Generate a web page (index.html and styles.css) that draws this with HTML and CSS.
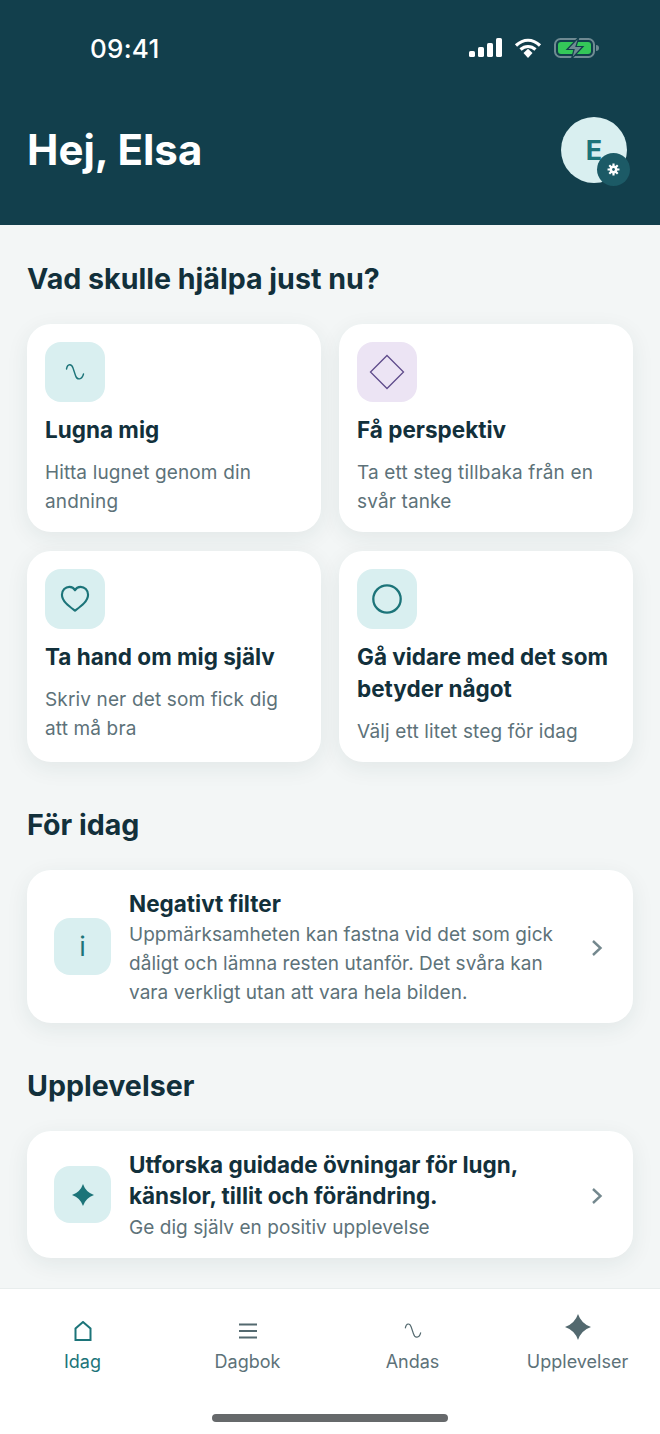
FILE: index.html
```html
<!DOCTYPE html>
<html lang="sv">
<head>
<meta charset="utf-8">
<title>Hej, Elsa</title>
<link rel="stylesheet" href="styles.css">
</head>
<body>
<div class="app">
  <header class="header">
    <div class="status">
      <span class="time">09:41</span>
      <div class="status-icons">
        <svg width="34" height="20" viewBox="0 0 34 20"><rect x="1" y="13" width="6" height="6" rx="1.6" fill="#fff"/><rect x="10" y="9" width="6" height="10" rx="1.6" fill="#fff"/><rect x="19" y="5" width="6" height="14" rx="1.6" fill="#fff"/><rect x="28" y="0" width="6" height="19" rx="1.6" fill="#fff"/></svg>
        <svg width="28" height="20" viewBox="0 0 28 20"><path d="M2 7.500C9.500 .5 18.500 .5 26 7.500" fill="none" stroke="#fff" stroke-width="3.200"/><path d="M6.500 11.500C11 7.500 17 7.500 21.500 11.500" fill="none" stroke="#fff" stroke-width="3.200"/><path d="M9.500 15L14 10.800 18.500 15 14 20Z" fill="#fff"/></svg>
        <svg width="46" height="22" viewBox="0 0 46 22"><rect x="1" y="2" width="39" height="18" rx="5.500" fill="none" stroke="#6f8a92" stroke-width="2"/><rect x="4" y="5" width="33" height="12" rx="3" fill="#34c759"/><path d="M42 8c2 0 3 1 3 3s-1 3-3 3z" fill="#6f8a92"/><path d="M25 0L13 12.500h7L17.500 22 29 9.500h-7z" fill="#6f8a92" stroke="#123f4c" stroke-width="1.200"/></svg>
      </div>
    </div>
    <div class="greeting">
      <h1>Hej, Elsa</h1>
      <div class="avatar">E
        <span class="gear">
          <svg width="13" height="13" viewBox="0 0 12 12"><g stroke="#fff" stroke-width="2"><path d="M6 .5v11M.5 6h11M2.100 2.100l7.800 7.800M9.900 2.100l-7.800 7.800"/></g><circle cx="6" cy="6" r="3.600" fill="#fff"/><circle cx="6" cy="6" r="1.300" fill="#1c5a66"/></svg>
        </span>
      </div>
    </div>
  </header>

  <main class="content">
    <h2 class="section-title first">Vad skulle hjälpa just nu?</h2>
    <div class="grid">
      <article class="card">
        <div class="tile teal"><svg width="20" height="20" viewBox="0 0 20 20"><path d="M1.500 7C2.500 1.500 6.500 1.500 8 6L10.500 13.500C12 18.500 17 18 18.500 12" fill="none" stroke="#1c7479" stroke-width="1.400" stroke-linecap="round"/></svg></div>
        <h3>Lugna mig</h3>
        <p>Hitta lugnet genom din andning</p>
      </article>
      <article class="card">
        <div class="tile purple"><svg width="36" height="36" viewBox="0 0 36 36"><path d="M18 1.500L34.500 18 18 34.500 1.500 18Z" fill="none" stroke="#5f4b8b" stroke-width="1.300"/></svg></div>
        <h3>Få perspektiv</h3>
        <p>Ta ett steg tillbaka från en svår tanke</p>
      </article>
      <article class="card">
        <div class="tile teal"><svg width="30" height="28" viewBox="0 0 32 30"><path d="M16 27.500C10 23 2 17.500 2 10.500 2 5.500 5.800 2 10 2c2.600 0 4.800 1.200 6 3.600C17.200 3.200 19.400 2 22 2c4.200 0 8 3.500 8 8.500 0 7-8 12.500-14 17Z" fill="none" stroke="#1c7479" stroke-width="2.300" stroke-linejoin="round"/></svg></div>
        <h3>Ta hand om mig själv</h3>
        <p>Skriv ner det som fick dig att må bra</p>
      </article>
      <article class="card">
        <div class="tile teal"><svg width="32" height="32" viewBox="0 0 32 32"><circle cx="16" cy="16" r="13.700" fill="none" stroke="#1c7479" stroke-width="2.300"/></svg></div>
        <h3>Gå vidare med det som betyder något</h3>
        <p>Välj ett litet steg för idag</p>
      </article>
    </div>

    <h2 class="section-title today">För idag</h2>
    <a class="row row-filter">
      <div class="tile-small"><span class="info">i</span></div>
      <div class="row-text">
        <h3>Negativt filter</h3>
        <p>Uppmärksamheten kan fastna vid det som gick dåligt och lämna resten utanför. Det svåra kan vara verkligt utan att vara hela bilden.</p>
      </div>
      <svg class="chevron" width="12" height="18" viewBox="0 0 12 18"><path d="M2 2l7.500 7L2 16" fill="none" stroke="#74888e" stroke-width="2.400"/></svg>
    </a>

    <h2 class="section-title exp">Upplevelser</h2>
    <a class="row row-exp">
      <div class="tile-small"><svg width="22" height="22" viewBox="0 0 24 24"><path d="M12 0Q15 9 24 12Q15 15 12 24Q9 15 0 12Q9 9 12 0Z" fill="#1c7479"/></svg></div>
      <div class="row-text">
        <h3>Utforska guidade övningar för lugn, känslor, tillit och förändring.</h3>
        <p>Ge dig själv en positiv upplevelse</p>
      </div>
      <svg class="chevron" width="12" height="18" viewBox="0 0 12 18"><path d="M2 2l7.500 7L2 16" fill="none" stroke="#74888e" stroke-width="2.400"/></svg>
    </a>
  </main>

  <nav class="tabs">
    <div class="tab active">
      <span class="tab-icon"><svg width="18" height="20" viewBox="0 0 18 20"><path d="M1.500 19V7.500L9 1l7.500 6.500V19Z" fill="none" stroke="#1c7479" stroke-width="2"/></svg></span>
      <span>Idag</span>
    </div>
    <div class="tab">
      <span class="tab-icon"><svg width="18" height="16" viewBox="0 0 18 16"><path d="M0 1.500h18M0 8h18M0 14.500h18" stroke="#53696f" stroke-width="2.200"/></svg></span>
      <span>Dagbok</span>
    </div>
    <div class="tab">
      <span class="tab-icon"><svg width="18" height="18" viewBox="0 0 20 20"><path d="M1.500 6.500C2.500 1 6.500 1 8 5.500L10.500 13C12 18.500 17 18 18.500 12" fill="none" stroke="#53696f" stroke-width="1.300" stroke-linecap="round"/></svg></span>
      <span>Andas</span>
    </div>
    <div class="tab">
      <span class="tab-icon tab-star"><svg width="26" height="26" viewBox="0 0 24 24"><path d="M12 0Q15 9 24 12Q15 15 12 24Q9 15 0 12Q9 9 12 0Z" fill="#53696f"/></svg></span>
      <span>Upplevelser</span>
    </div>
    <div class="home-bar"></div>
  </nav>
</div>
</body>
</html>
```

FILE: styles.css
```css
* { box-sizing: border-box; margin: 0; padding: 0; }
html, body { width: 660px; height: 1434px; overflow: hidden; }
body { font-family: Inter, "Liberation Sans", sans-serif; background: #f3f6f6; color: #12303b; }
.app { width: 660px; height: 1434px; display: flex; flex-direction: column; }

.header { height: 225px; background: #123f4c; color: #fff; padding: 34px 33px 0 28px; flex: none; }
.status { display: flex; justify-content: space-between; align-items: center; height: 30px; padding: 0 27px 0 62px; }
.time { font-size: 26px; font-weight: 500; line-height: 30px; letter-spacing: .25px; }
.status-icons { display: flex; align-items: center; gap: 12px; margin-top: -2px; }
.greeting { display: flex; justify-content: space-between; align-items: center; margin-top: 53px; height: 66px; }
h1 { font-size: 42px; font-weight: 700; line-height: 56px; margin-left: -1px; }
.avatar { position: relative; width: 66px; height: 66px; border-radius: 50%; background: #d9eff0; color: #1c7479; font-size: 27px; font-weight: 700; display: flex; align-items: center; justify-content: center; }
.gear { position: absolute; right: -3px; bottom: -3px; width: 33px; height: 33px; border-radius: 50%; background: #1c5a66; display: flex; align-items: center; justify-content: center; }

.content { flex: 1; padding: 0 27px; }
.section-title { font-size: 28.6px; font-weight: 700; line-height: 36px; color: #12303b; }
.first { margin-top: 36px; }
.today { margin-top: 45px; }
.exp { margin-top: 45px; }

.grid { display: grid; grid-template-columns: 294px 294px; column-gap: 18px; row-gap: 19px; margin-top: 27px; }
.card { background: #fff; border-radius: 24px; padding: 18px 18px 16.5px; box-shadow: 0 6px 22px rgba(20, 60, 70, .08); }
.tile { width: 60px; height: 60px; border-radius: 16px; display: flex; align-items: center; justify-content: center; }
.teal { background: #d9eff0; }
.purple { background: #ece4f4; }
.card h3 { font-size: 22.5px; font-weight: 700; line-height: 32px; color: #12303b; margin-top: 11.5px; }
.card p { font-size: 19px; line-height: 29px; color: #5d7279; margin-top: 12px; letter-spacing: .14px; }

.row { display: flex; align-items: center; background: #fff; border-radius: 24px; box-shadow: 0 6px 22px rgba(20, 60, 70, .08); padding: 0 30px 0 27px; margin-top: 27px; }
.row-filter { height: 153px; }
.row-exp { height: 127px; }
.tile-small { width: 57px; height: 57px; border-radius: 16px; background: #d9eff0; display: flex; align-items: center; justify-content: center; flex: none; margin-right: 18px; }
.info { font-size: 27px; color: #1c7479; font-weight: 400; }
.row-text { flex: 1; padding-top: 2px; }
.row-text h3 { font-size: 22.5px; font-weight: 700; line-height: 31px; color: #12303b; }
.row-text p { font-size: 19px; line-height: 29px; color: #5d7279; letter-spacing: .05px; margin-top: 2px; }
.row-filter h3 { line-height: 32px; }
.row-filter p { margin-top: 0; }
.chevron { flex: none; margin: 3px 0 0 32px; }

.tabs { position: relative; height: 146px; background: #fff; border-top: 1px solid #e8eded; display: grid; grid-template-columns: repeat(4, 165px); flex: none; }
.tab { display: flex; flex-direction: column; align-items: center; padding-top: 22px; color: #5d7279; font-size: 18px; line-height: 24px; }
.tab.active { color: #1c7479; }
.tab-icon { height: 39px; display: flex; align-items: center; justify-content: center; }
.tab-star { padding-bottom: 7px; }
.home-bar { position: absolute; left: 212px; bottom: 12px; width: 236px; height: 8px; border-radius: 4px; background: #66696b; }
```
